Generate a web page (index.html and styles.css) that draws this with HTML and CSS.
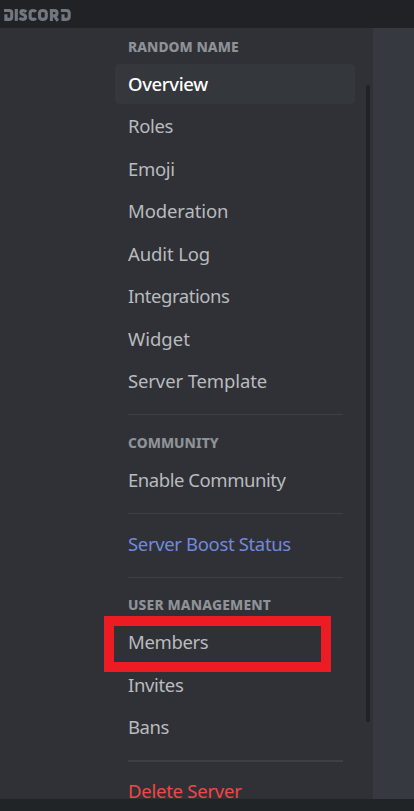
FILE: index.html
```html
<!DOCTYPE html>
<html lang="en">
<head>
<meta charset="utf-8">
<title>Server Settings</title>
<link rel="stylesheet" href="styles.css">
</head>
<body>
<div class="app">
  <header class="titlebar">
    <svg class="wordmark" width="68" height="14" viewBox="0 0 68 14" role="img" aria-label="Discord" fill="none" stroke="#72767d" stroke-width="3.1">
      <path d="M0 2.5H5.2Q7.7 2.5 7.7 5V8.9Q7.7 11.4 5.2 11.4H1.9V6.2"/>
      <path d="M12.3 1V12.9"/>
      <path d="M22.4 3.8Q20.8 2.5 18.9 2.5Q16.9 2.5 16.9 4.3Q16.9 5.8 19 6.4Q21.6 7.1 21.6 9.1Q21.6 11.4 19.1 11.4Q16.8 11.4 15.4 10"/>
      <path d="M32 3.6Q31 2.5 29.2 2.5Q26.1 2.5 26.1 5.2V8.5Q26.1 11.4 29.2 11.4Q31 11.4 32 10.3"/>
      <path d="M38.9 2.5Q42.3 2.5 42.3 5.3V8.5Q42.3 11.4 38.9 11.4Q35.5 11.4 35.5 8.5V5.3Q35.5 2.5 38.9 2.5Z"/>
      <path d="M47.4 12.9V2.5H50.5Q53 2.5 53 5Q53 7.7 50.5 7.7H47.4M50.3 7.7L53.8 12.8"/>
      <path d="M56.9 2.5H62.3Q65.2 2.5 65.2 5.2V8.6Q65.2 11.4 62.3 11.4H59V6.2"/>
    </svg>
  </header>
  <main class="settings">
    <nav class="sidebar">
      <h2 class="heading heading-first">RANDOM NAME</h2>
      <a class="item selected">Overview</a>
      <a class="item">Roles</a>
      <a class="item">Emoji</a>
      <a class="item loose">Moderation</a>
      <a class="item loose">Audit Log</a>
      <a class="item tight">Integrations</a>
      <a class="item wide">Widget</a>
      <a class="item loose">Server Template</a>
      <hr class="separator">
      <h2 class="heading">COMMUNITY</h2>
      <a class="item tight">Enable Community</a>
      <hr class="separator">
      <a class="item boost">Server Boost Status</a>
      <hr class="separator">
      <h2 class="heading heading-users">USER MANAGEMENT</h2>
      <a class="item highlighted">Members</a>
      <a class="item">Invites</a>
      <a class="item tight">Bans</a>
      <hr class="separator thick">
      <a class="item danger">Delete Server</a>
    </nav>
    <div class="scroll"><div class="thumb"></div></div>
    <div class="content"></div>
  </main>
  <footer class="bottom"></footer>
</div>
</body>
</html>
```
FILE: styles.css
```css
*, *::after { box-sizing: border-box; }
body {
  margin: 0;
  background: #2f3136;
  font-family: "Noto Sans", sans-serif;
}
.app {
  width: 414px;
  height: 811px;
  display: grid;
  grid-template-rows: 28px 771px 12px;
  overflow: hidden;
}
.titlebar {
  background: #202225;
  padding: 8px 0 0 4px;
}
.wordmark { display: block; }
.settings {
  display: grid;
  grid-template-columns: 366px 7px 41px;
  overflow: hidden;
  background: #2f3136;
}
.sidebar {
  display: flex;
  flex-direction: column;
  padding-left: 115px;
  min-width: 0;
}
.sidebar > * { flex-shrink: 0; }
.heading {
  margin: 0;
  height: 34.5px;
  padding-left: 13px;
  font-size: 13.8px;
  font-weight: 800;
  line-height: 35px;
  letter-spacing: 0.05px;
  color: #8e9297;
  white-space: nowrap;
}
.heading-first {
  height: 35.8px;
  line-height: 38px;
}
.heading-users {
  line-height: 33px;
  letter-spacing: 0.18px;
}
.item {
  position: relative;
  display: block;
  width: 240px;
  height: 40px;
  margin-bottom: 2.5px;
  padding-left: 13px;
  border-radius: 5px;
  font-size: 18.5px;
  line-height: 39px;
  letter-spacing: -0.35px;
  color: #b9bbbe;
  white-space: nowrap;
}
.loose { letter-spacing: -0.12px; }
.tight { letter-spacing: -0.45px; }
.wide { letter-spacing: 0; }
.selected {
  background: #34373c;
  color: #fff;
  font-weight: 500;
  line-height: 40px;
}
.boost { color: #7289da; }
.danger {
  color: #f04747;
  letter-spacing: -0.25px;
}
.highlighted::after {
  content: "";
  position: absolute;
  left: -11px;
  top: -6.3px;
  width: 227px;
  height: 56px;
  border: 10px solid #ed1c24;
}
.separator {
  width: 215px;
  height: 1px;
  margin: 10.4px 0 10.1px 13px;
  border: 0;
  background: #3c3f45;
}
.thick {
  height: 2px;
  margin-bottom: 9.1px;
}
.scroll { padding-top: 57px; }
.thumb {
  width: 4px;
  height: 637px;
  border-radius: 2px;
  background: #202225;
}
.content { background: #36393f; }
.bottom { background: #202427; }
```
